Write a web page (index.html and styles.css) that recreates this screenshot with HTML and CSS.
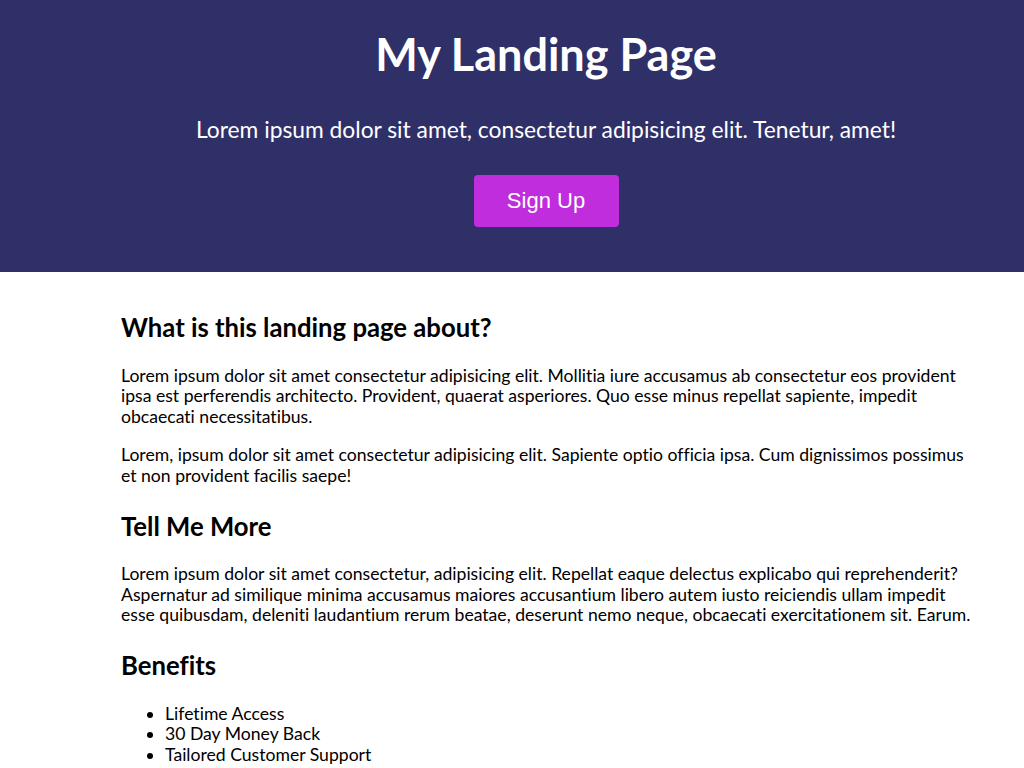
FILE: index.html
```html
<!DOCTYPE html>
<html lang="en">
<head>
<meta charset="utf-8">
<title>My Landing Page</title>
<link rel="stylesheet" href="styles.css">
</head>
<body>
<header class="hero">
  <div class="hero-inner">
    <h1 class="hero-title">My Landing Page</h1>
    <p class="hero-sub">Lorem ipsum dolor sit amet, consectetur adipisicing elit. Tenetur, amet!</p>
    <button class="btn" type="button">Sign Up</button>
  </div>
</header>
<main class="content">
  <h2>What is this landing page about?</h2>
  <p>Lorem ipsum dolor sit amet consectetur adipisicing elit. Mollitia iure accusamus ab consectetur eos provident ipsa est perferendis architecto. Provident, quaerat asperiores. Quo esse minus repellat sapiente, impedit obcaecati necessitatibus.</p>
  <p>Lorem, ipsum dolor sit amet consectetur adipisicing elit. Sapiente optio officia ipsa. Cum dignissimos possimus et non provident facilis saepe!</p>
  <h2>Tell Me More</h2>
  <p>Lorem ipsum dolor sit amet consectetur, adipisicing elit. Repellat eaque delectus explicabo qui reprehenderit? Aspernatur ad similique minima accusamus maiores accusantium libero autem iusto reiciendis ullam impedit esse quibusdam, deleniti laudantium rerum beatae, deserunt nemo neque, obcaecati exercitationem sit. Earum.</p>
  <h2>Benefits</h2>
  <ul class="benefits">
    <li>Lifetime Access</li>
    <li>30 Day Money Back</li>
    <li>Tailored Customer Support</li>
  </ul>
</main>
</body>
</html>
```

FILE: styles.css
```css
* { box-sizing: border-box; }

body {
  margin: 0;
  font-family: Lato, "Open Sans", sans-serif;
  font-size: 17.6px;
  line-height: 20.6px;
  font-variant-ligatures: none;
  color: #000;
  background: #fff;
}

.hero {
  background: #303069;
  color: #fff;
  padding: 26px 0 45px;
}

.hero-inner {
  width: 850px;
  margin-left: 121px;
  display: flex;
  flex-direction: column;
  align-items: center;
  text-align: center;
}

.hero-title {
  margin: 0;
  font-size: 45px;
  font-weight: 700;
  line-height: 57.6px;
}

.hero-sub {
  margin: 32px 0 33px;
  font-size: 22.8px;
  line-height: 26.4px;
}

.btn {
  font-family: "Liberation Sans", Arial, sans-serif;
  font-size: 22px;
  line-height: 26px;
  color: #fff;
  background: #c02ddd;
  border: none;
  border-radius: 4px;
  padding: 13px 0;
  width: 145px;
  height: 52px;
  cursor: pointer;
}

.content {
  width: 850px;
  margin-left: 121px;
  padding: 16px 0 20px;
}

.content h2 {
  font-size: 25.7px;
  font-weight: 700;
  line-height: 33.6px;
  margin: 23px 0 21px;
}

.content p {
  margin: 18px 0;
}

.benefits {
  margin: 17px 0;
  padding-left: 44px;
}
```
